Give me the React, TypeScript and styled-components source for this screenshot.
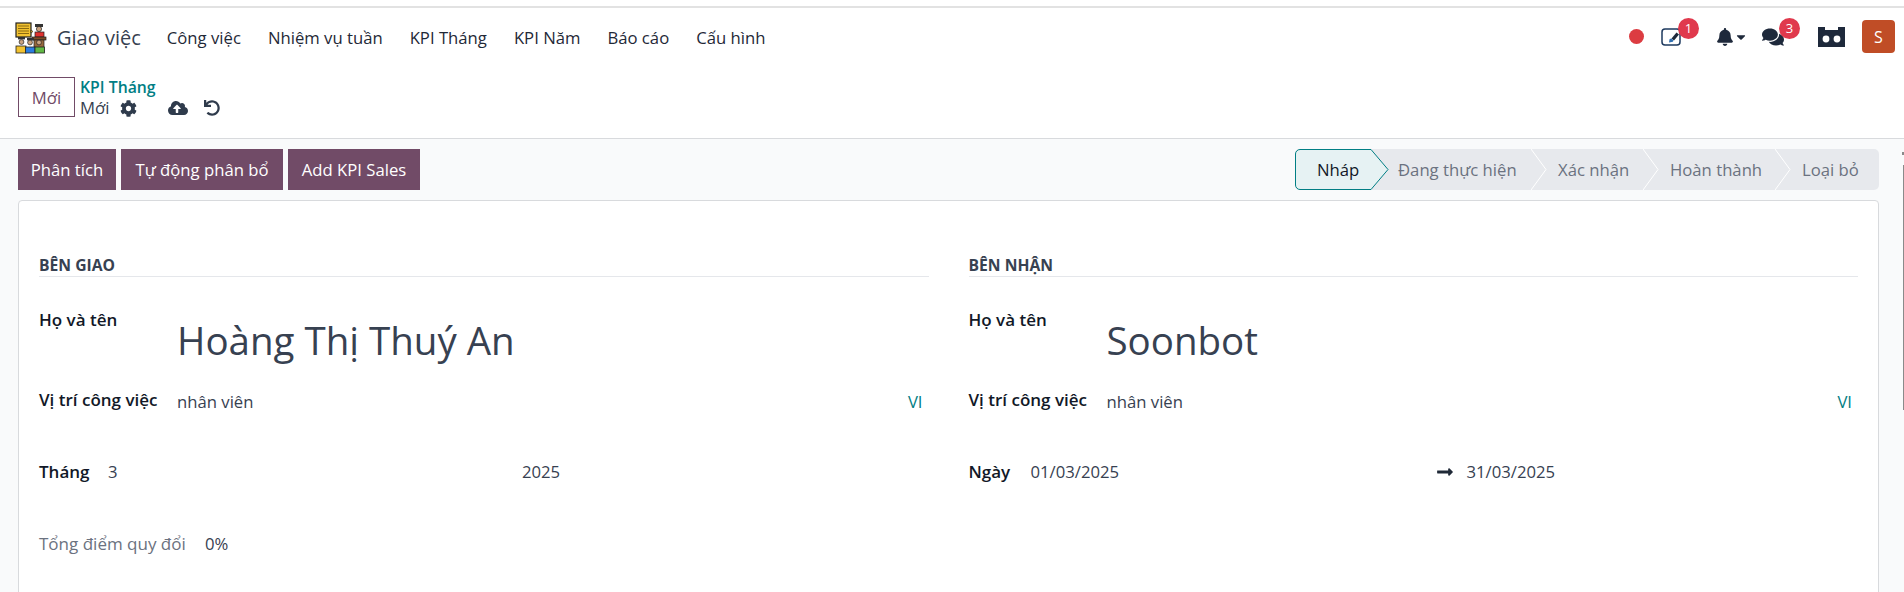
import React from 'react';
import styled, { createGlobalStyle } from 'styled-components';
import { FaBell, FaCaretDown, FaCloudUploadAlt, FaCog, FaComments, FaLongArrowAltRight, FaUndo } from 'react-icons/fa';

const Global = createGlobalStyle`
  html, body {
    margin: 0;
    height: 592px;
    overflow: hidden;
    background: #fff;
    font-family: "Open Sans", "Noto Sans", sans-serif;
    font-size: 16.7px;
    color: #374151;
  }
`;

const Page = styled.div`
  height: 592px;
  display: flex;
  flex-direction: column;
  padding-top: 6px;
  box-sizing: border-box;
  overflow: hidden;
`;

const NavBar = styled.header`
  height: 58px;
  border-top: 2px solid #e2e2e2;
  display: flex;
  align-items: center;
  padding: 3px 9px 0 15px;
  box-sizing: border-box;
`;

const Logo = styled.svg`
  width: 32px;
  height: 32px;
  flex: none;
`;

const Brand = styled.span`
  font-size: 20px;
  color: #374151;
  margin: 0 26px 0 10px;
`;

const NavLink = styled.a`
  color: #1f2937;
  font-size: 16.7px;
  margin-right: 27px;
`;

const NavRight = styled.div`
  margin-left: auto;
  margin-top: -2px;
  display: flex;
  align-items: center;
  color: #1e293b;
`;

const Dot = styled.span`
  width: 15px;
  height: 15px;
  border-radius: 50%;
  background: #dc3c41;
  margin-right: 17px;
`;

const IconSlot = styled.span<{ $w: number }>`
  position: relative;
  display: flex;
  align-items: center;
  width: ${p => p.$w}px;
  height: 20px;
`;

const Badge = styled.span`
  position: absolute;
  top: -9px;
  left: 17px;
  width: 21px;
  height: 21px;
  border-radius: 50%;
  background: #e0394d;
  color: #fff;
  font-size: 13px;
  display: flex;
  align-items: center;
  justify-content: center;
`;

const Avatar = styled.span`
  width: 33px;
  height: 33px;
  border-radius: 4px;
  background: #c04d26;
  color: #fff;
  font-size: 16px;
  display: flex;
  align-items: center;
  justify-content: center;
`;

const ControlPanel = styled.div`
  height: 75px;
  border-bottom: 1px solid #d8dadd;
  display: flex;
  align-items: flex-start;
  padding: 13px 0 0 18px;
  box-sizing: border-box;
`;

const NewButton = styled.button`
  width: 57px;
  height: 40px;
  background: #fff;
  border: 1px solid #714b67;
  color: #714b67;
  font: inherit;
  padding: 0;
`;

const Crumbs = styled.div`
  margin-left: 5px;
  display: flex;
  flex-direction: column;
`;

const CrumbLink = styled.a`
  color: #017e84;
  font-weight: 600;
  font-size: 15.8px;
  line-height: 20px;
`;

const CrumbRow = styled.div`
  display: flex;
  align-items: center;
  line-height: 22px;
  color: #374151;
`;

const CrumbIcon = styled.span<{ $left: number }>`
  display: flex;
  margin-left: ${p => p.$left}px;
  color: #2f3b4c;
`;

const Content = styled.main`
  position: relative;
  flex: 1;
  background: #f9fafb;
  padding: 10px 25px 0 18px;
  min-height: 0;
`;

const ScrollThumb = styled.div`
  position: absolute;
  right: 0;
  top: 26px;
  width: 1px;
  height: 245px;
  background: #8a8a8a;
`;

const ScrollArrow = styled.div`
  position: absolute;
  right: 0;
  top: 13px;
  width: 2px;
  height: 3px;
  background: #8a8a8a;
`;

const ActionRow = styled.div`
  display: flex;
  justify-content: space-between;
  height: 41px;
`;

const Actions = styled.div`
  display: flex;
  gap: 5px;
`;

const ActionButton = styled.button<{ $w: number }>`
  width: ${p => p.$w}px;
  background: #714b67;
  color: #fff;
  border: 0;
  font: inherit;
  padding: 0;
  white-space: nowrap;
`;

const StatusBar = styled.div`
  width: 584px;
  display: flex;
  background: #e7e9ed;
  border-radius: 5px;
`;

const Step = styled.div<{ $w: number; $active?: boolean }>`
  position: relative;
  width: ${p => p.$w}px;
  flex: none;
  display: flex;
  align-items: center;
  padding-left: ${p => (p.$active ? 22 : 27)}px;
  box-sizing: border-box;
  white-space: nowrap;
  color: ${p => (p.$active ? '#111827' : '#6b7280')};
`;

const Chevron = styled.svg`
  position: absolute;
  right: -16px;
  top: 0;
  width: 16px;
  height: 41px;
  z-index: 1;
`;

const ActiveShape = styled.svg`
  position: absolute;
  left: 0;
  top: 0;
  width: 94px;
  height: 41px;
`;

const StepLabel = styled.span`
  position: relative;
  z-index: 1;
`;

const Sheet = styled.section`
  height: 400px;
  margin-top: 10px;
  background: #fff;
  border: 1px solid #d8dadd;
  border-radius: 4px 4px 0 0;
  padding: 49px 20px 0;
  display: grid;
  grid-template-columns: 1fr 1fr;
  column-gap: 40px;
`;

const Group = styled.div`
  display: flex;
  flex-direction: column;
`;

const GroupTitle = styled.h3`
  margin: 0;
  padding-top: 4px;
  font-size: 15.7px;
  font-weight: 700;
  color: #374151;
  line-height: 22px;
  border-bottom: 1px solid #e5e7eb;
`;

const Row = styled.div<{ $h?: number; $top?: number }>`
  display: flex;
  align-items: flex-start;
  box-sizing: border-box;
  height: ${p => p.$h ?? 72}px;
  padding-top: ${p => p.$top ?? 0}px;
`;

const Label = styled.label<{ $w: number; $muted?: boolean }>`
  width: ${p => p.$w}px;
  flex: none;
  font-size: 17px;
  font-weight: ${p => (p.$muted ? 400 : 600)};
  color: ${p => (p.$muted ? '#6b7280' : '#111827')};
  line-height: 24px;
  white-space: nowrap;
`;

const Value = styled.span<{ $w?: number; $drop?: boolean }>`
  line-height: 24px;
  color: #374151;
  margin-top: ${p => (p.$drop ? 2 : 0)}px;
  ${p => (p.$w ? `width: ${p.$w}px; flex: none;` : '')}
`;

const BigName = styled.div`
  font-size: 38.5px;
  line-height: 54px;
  color: #374151;
  margin-top: 5px;
`;

const Lang = styled.span`
  margin-left: auto;
  margin-right: 6px;
  margin-top: 2px;
  color: #017e84;
  line-height: 24px;
`;

const Arrow = styled.span`
  display: flex;
  align-items: center;
  height: 24px;
  width: 31px;
  flex: none;
  color: #1f2937;
  font-size: 18px;
`;

const navItems = ['Công việc', 'Nhiệm vụ tuần', 'KPI Tháng', 'KPI Năm', 'Báo cáo', 'Cấu hình'];
const steps = [
  { label: 'Nháp', w: 76 },
  { label: 'Đang thực hiện', w: 160 },
  { label: 'Xác nhận', w: 112 },
  { label: 'Hoàn thành', w: 132 },
  { label: 'Loại bỏ', w: 104 },
];

const AppLogo = () => (
  <Logo viewBox="0 0 32 32">
    <rect x="1" y="1" width="15" height="14" fill="#f2c230" stroke="#222" strokeWidth="1.2" />
    <path d="M3 4h11M3 6.5h11M3 9h11M3 11.5h11" stroke="#8a6a10" strokeWidth="1" />
    <path d="M16 8l2 1.5-2 1.5z" fill="#f2c230" stroke="#222" strokeWidth=".6" />
    <rect x="20" y="2" width="8" height="3" fill="#333" />
    <circle cx="24" cy="7" r="2.6" fill="#caa37f" stroke="#222" strokeWidth=".7" />
    <rect x="20" y="10" width="9" height="5" fill="#e0322f" stroke="#222" strokeWidth=".7" />
    <rect x="17" y="15" width="14" height="3" fill="#7d4d26" stroke="#222" strokeWidth=".7" />
    <rect x="19" y="18" width="10" height="12" fill="#96683c" stroke="#222" strokeWidth=".7" />
    <rect x="3" y="15" width="7" height="2.4" fill="#333" />
    <circle cx="6.5" cy="20" r="2.4" fill="#caa37f" stroke="#222" strokeWidth=".7" />
    <rect x="1" y="24" width="10" height="7" fill="#f2c230" stroke="#222" strokeWidth=".8" />
    <rect x="12" y="16" width="7" height="2.4" fill="#333" />
    <circle cx="15" cy="20.5" r="2.4" fill="#caa37f" stroke="#222" strokeWidth=".7" />
    <rect x="10.5" y="25" width="9.5" height="6" fill="#2b7de0" stroke="#222" strokeWidth=".8" />
    <circle cx="24" cy="20.5" r="2.4" fill="#caa37f" stroke="#222" strokeWidth=".7" />
    <rect x="20" y="25" width="9.5" height="6" fill="#62b846" stroke="#222" strokeWidth=".8" />
  </Logo>
);

const EditIcon = () => (
  <svg width="21" height="18" viewBox="0 0 21 18">
    <rect x="1" y="1" width="18" height="16" rx="3" fill="#fff" stroke="#1e3a5f" strokeWidth="1.5" />
    <path d="M10.5 10.5l5-6 2.5 2-5 6z" fill="#1e293b" />
    <path d="M8 14.5l.6-3.4 1.9-.6 2 2-.6 1.2z" fill="#2f6fb0" />
  </svg>
);

const CameraIcon = () => (
  <svg width="27" height="20" viewBox="0 0 27 20">
    <path d="M0 0h7v3h13V0h7v20H0z" fill="#1e293b" />
    <circle cx="8" cy="12" r="3.4" fill="#fff" />
    <circle cx="19" cy="12" r="3.4" fill="#fff" />
  </svg>
);

export default function App() {
  return (
    <Page>
      <Global />
      <NavBar>
        <AppLogo />
        <Brand>Giao việc</Brand>
        {navItems.map(item => (
          <NavLink key={item}>{item}</NavLink>
        ))}
        <NavRight>
          <Dot />
          <IconSlot $w={55}>
            <EditIcon />
            <Badge>1</Badge>
          </IconSlot>
          <IconSlot $w={46}>
            <FaBell size={18} />
            <FaCaretDown size={14} />
          </IconSlot>
          <IconSlot $w={56}>
            <FaComments size={22} />
            <Badge>3</Badge>
          </IconSlot>
          <IconSlot $w={44}>
            <CameraIcon />
          </IconSlot>
          <Avatar>S</Avatar>
        </NavRight>
      </NavBar>

      <ControlPanel>
        <NewButton>Mới</NewButton>
        <Crumbs>
          <CrumbLink>KPI Tháng</CrumbLink>
          <CrumbRow>
            Mới
            <CrumbIcon $left={11}>
              <FaCog size={17} />
            </CrumbIcon>
            <CrumbIcon $left={31}>
              <FaCloudUploadAlt size={20} />
            </CrumbIcon>
            <CrumbIcon $left={16}>
              <FaUndo size={16} />
            </CrumbIcon>
          </CrumbRow>
        </Crumbs>
      </ControlPanel>

      <Content>
        <ScrollArrow />
        <ScrollThumb />
        <ActionRow>
          <Actions>
            <ActionButton $w={98}>Phân tích</ActionButton>
            <ActionButton $w={162}>Tự động phân bổ</ActionButton>
            <ActionButton $w={132}>Add KPI Sales</ActionButton>
          </Actions>
          <StatusBar>
            {steps.map((s, i) => (
              <Step key={s.label} $w={s.w} $active={i === 0}>
                {i === 0 && (
                  <ActiveShape viewBox="0 0 94 41">
                    <path
                      d="M5 .5H76L93 20.5 76 40.5H5a4.5 4.5 0 0 1-4.5-4.5V5A4.5 4.5 0 0 1 5 .5z"
                      fill="#e6f2f3"
                      stroke="#017e84"
                    />
                  </ActiveShape>
                )}
                <StepLabel>{s.label}</StepLabel>
                {i > 0 && i < steps.length - 1 && (
                  <Chevron viewBox="0 0 16 41">
                    <path d="M0 0l15 20.5L0 41" fill="none" stroke="#fff" />
                  </Chevron>
                )}
              </Step>
            ))}
          </StatusBar>
        </ActionRow>

        <Sheet>
          <Group>
            <GroupTitle>BÊN GIAO</GroupTitle>
            <Row $h={111} $top={31}>
              <Label $w={138}>Họ và tên</Label>
              <BigName>Hoàng Thị Thuý An</BigName>
            </Row>
            <Row>
              <Label $w={138}>Vị trí công việc</Label>
              <Value $drop>nhân viên</Value>
              <Lang>VI</Lang>
            </Row>
            <Row>
              <Label $w={69}>Tháng</Label>
              <Value $w={414}>3</Value>
              <Value>2025</Value>
            </Row>
            <Row>
              <Label $w={166} $muted>Tổng điểm quy đổi</Label>
              <Value>0%</Value>
            </Row>
          </Group>
          <Group>
            <GroupTitle>BÊN NHẬN</GroupTitle>
            <Row $h={111} $top={31}>
              <Label $w={138}>Họ và tên</Label>
              <BigName>Soonbot</BigName>
            </Row>
            <Row>
              <Label $w={138}>Vị trí công việc</Label>
              <Value $drop>nhân viên</Value>
              <Lang>VI</Lang>
            </Row>
            <Row>
              <Label $w={62}>Ngày</Label>
              <Value $w={405}>01/03/2025</Value>
              <Arrow>
                <FaLongArrowAltRight />
              </Arrow>
              <Value>31/03/2025</Value>
            </Row>
          </Group>
        </Sheet>
      </Content>
    </Page>
  );
}
